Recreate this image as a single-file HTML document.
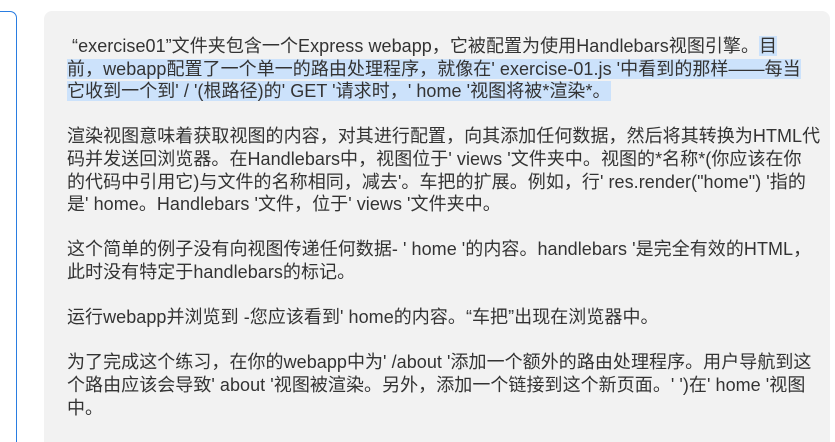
<!DOCTYPE html>
<html><head><meta charset="utf-8"><style>
html,body{margin:0;padding:0;background:#fff;width:835px;height:442px;overflow:hidden;position:relative;}
.left{position:absolute;left:-10px;top:11px;width:27px;height:431px;box-sizing:border-box;border:1px solid #2a7de1;border-bottom:none;border-radius:7px 7px 0 0;}
.panel{position:absolute;left:44px;top:11px;width:786px;height:431px;background:#f2f2f2;border-radius:8px 8px 0 0;}
.txt{position:absolute;left:67px;top:35px;font-family:"Liberation Sans","Noto Sans CJK SC",sans-serif;font-size:18px;letter-spacing:0.05px;line-height:22.6px;color:#333;white-space:nowrap;}
p{margin:0 0 22.6px 0;}
.sel{background:#cce2fb;}
</style></head><body>
<div class="left"></div>
<div class="panel"></div>
<div class="txt">
<p>&nbsp;“exercise01”文件夹包含一个Express webapp，它被配置为使用Handlebars视图引擎。<span class="sel">目</span><br><span class="sel">前，webapp配置了一个单一的路由处理程序，就像在' exercise-01.js '中看到的那样——每当</span><br><span class="sel">它收到一个到' / '(根路径)的' GET '请求时，' home '视图将被*渲染*。</span></p>
<p>渲染视图意味着获取视图的内容，对其进行配置，向其添加任何数据，然后将其转换为HTML代<br>码并发送回浏览器。在Handlebars中，视图位于' views '文件夹中。视图的*名称*(你应该在你<br>的代码中引用它)与文件的名称相同，减去'。车把的扩展。例如，行' res.render("home") '指的<br>是' home。Handlebars '文件，位于' views '文件夹中。</p>
<p>这个简单的例子没有向视图传递任何数据- ' home '的内容。handlebars '是完全有效的HTML，<br>此时没有特定于handlebars的标记。</p>
<p>运行webapp并浏览到 -您应该看到' home的内容。“车把”出现在浏览器中。</p>
<p style="margin:0">为了完成这个练习，在你的webapp中为' /about '添加一个额外的路由处理程序。用户导航到这<br>个路由应该会导致' about '视图被渲染。另外，添加一个链接到这个新页面。' ')在' home '视图<br>中。</p>
</div>
</body></html>
